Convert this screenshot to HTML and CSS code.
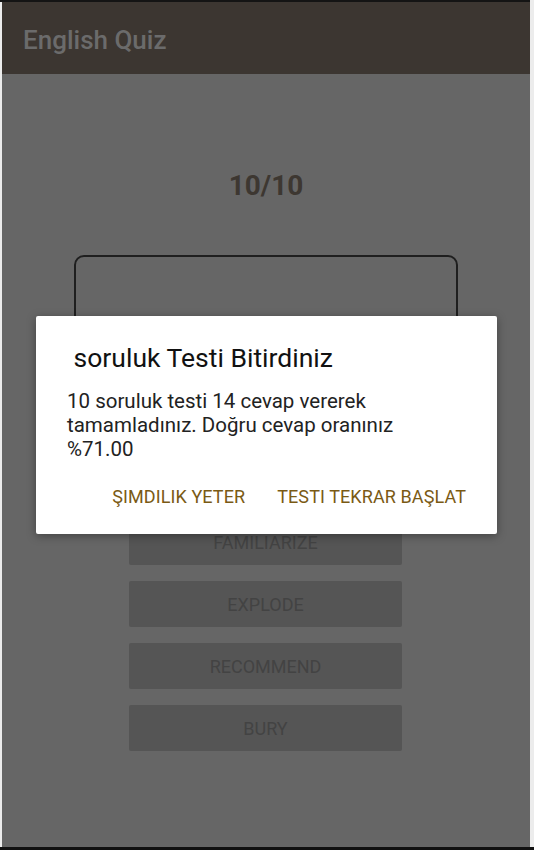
FILE: index.html
```html
<!DOCTYPE html>
<html>
<head>
<meta charset="utf-8">
<link rel="stylesheet" href="styles.css">
</head>
<body>
<div class="topline"></div>
<div class="screen">
  <header class="appbar">English Quiz</header>
  <main class="content">
    <div class="counter">10/10</div>
    <div class="card"></div>
    <div class="answers">
      <div class="answer">FAMILIARIZE</div>
      <div class="answer">EXPLODE</div>
      <div class="answer">RECOMMEND</div>
      <div class="answer">BURY</div>
    </div>
  </main>
  <div class="dialog">
    <div class="dialog-title">&nbsp;soruluk Testi Bitirdiniz</div>
    <div class="dialog-body">10 soruluk testi 14 cevap vererek tamamladınız. Doğru cevap oranınız %71.00</div>
    <div class="dialog-actions">
      <span class="action">ŞIMDILIK YETER</span>
      <span class="action">TESTI TEKRAR BAŞLAT</span>
    </div>
  </div>
</div>
<div class="bottomline"></div>
</body>
</html>
```
FILE: styles.css
```css
html, body {
  margin: 0;
  padding: 0;
}
body {
  background: #ececec;
  font-family: Roboto, "Noto Sans", sans-serif;
  width: 534px;
  height: 850px;
  overflow: hidden;
}
.topline {
  height: 2px;
  background: #141414;
  width: 530px;
}
.bottomline {
  height: 3px;
  background: #111;
}
.screen {
  position: relative;
  margin-left: 2px;
  width: 528px;
  height: 845px;
  background: #666666;
  display: flex;
  flex-direction: column;
}
.appbar {
  height: 72px;
  background: #3c3631;
  color: #6b6b6b;
  font-size: 26px;
  font-weight: 500;
  display: flex;
  align-items: center;
  padding-left: 21px;
  padding-top: 4px;
  box-sizing: border-box;
}
.content {
  flex: 1;
  display: flex;
  flex-direction: column;
  align-items: center;
}
.counter {
  margin-top: 96px;
  font-size: 28px;
  font-weight: 700;
  color: #3d3731;
  line-height: 32px;
}
.card {
  margin-top: 53px;
  width: 384px;
  height: 200px;
  box-sizing: border-box;
  border: 2px solid #1f1f1f;
  border-radius: 10px;
}
.answers {
  margin-top: 64px;
  display: flex;
  flex-direction: column;
  gap: 16px;
  margin-left: -1px;
}
.answer {
  width: 273px;
  height: 46px;
  background: #555555;
  border-radius: 2px;
  color: #434343;
  font-size: 18px;
  display: flex;
  align-items: center;
  justify-content: center;
}
.dialog {
  position: absolute;
  left: 34px;
  top: 314px;
  width: 461px;
  height: 218px;
  background: #fff;
  border-radius: 2px;
  box-shadow: 0 2px 10px rgba(0,0,0,0.35);
  box-sizing: border-box;
  padding: 27px 31px 0 31px;
}
.dialog-title {
  font-size: 26.5px;
  color: #111;
  line-height: 30px;
}
.dialog-body {
  margin-top: 16px;
  font-size: 20.5px;
  line-height: 24px;
  color: #222;
  width: 345px;
}
.dialog-actions {
  margin-top: 25px;
  display: flex;
  justify-content: flex-end;
  gap: 32px;
  margin-right: 0;
}
.action {
  font-size: 18px;
  font-weight: 400;
  letter-spacing: 0.1px;
  color: #7a5a14;
  line-height: 22px;
}
```
